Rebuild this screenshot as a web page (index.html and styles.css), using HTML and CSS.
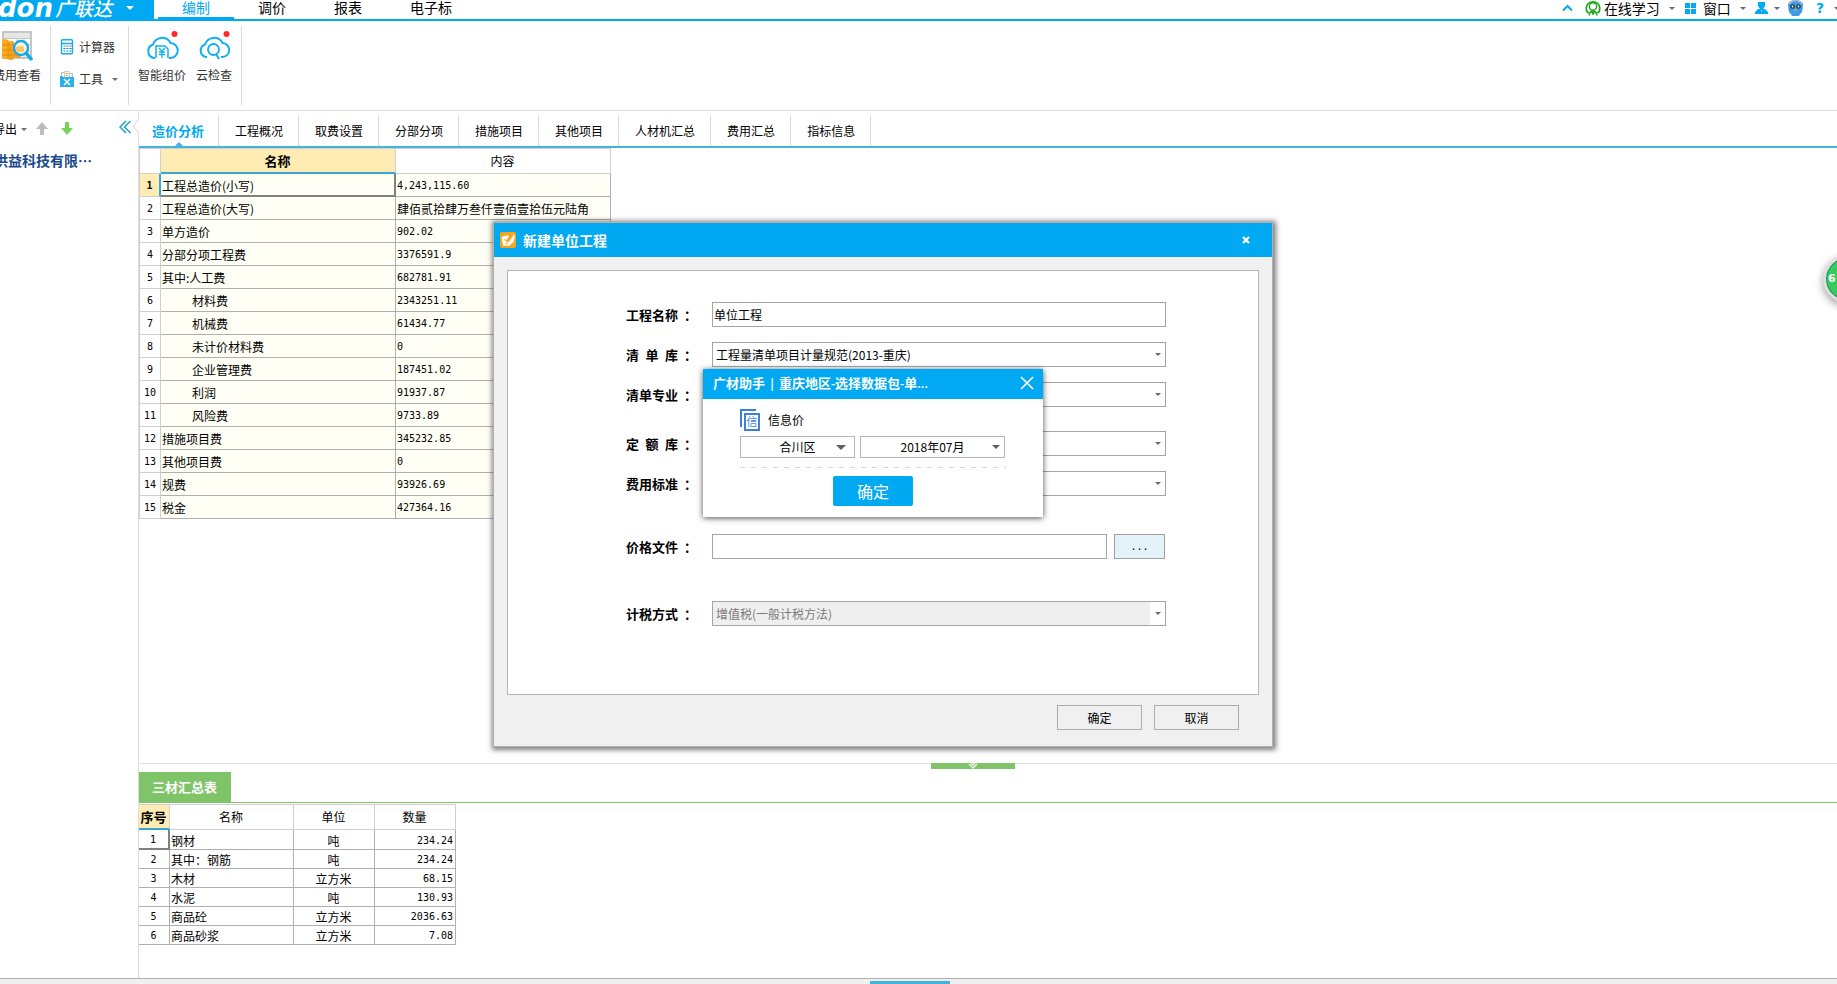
FILE: index.html
```html
<!DOCTYPE html>
<html lang="zh-CN">
<head>
<meta charset="utf-8">
<title>广联达 - 造价分析</title>
<link rel="stylesheet" href="styles.css">
</head>
<body>
<header class="topbar">
  <button class="brand" type="button"><span class="brand-en">don</span><span class="brand-cn">广联达</span><i class="tri tri-white"></i></button>
  <nav class="menu">
    <a class="menu-item active" href="#">编制</a>
    <a class="menu-item" href="#">调价</a>
    <a class="menu-item" href="#">报表</a>
    <a class="menu-item wide" href="#">电子标</a>
  </nav>
  <div class="tools">
    <button class="tool" type="button" aria-label="收起"><svg width="11" height="8" viewBox="0 0 11 8"><path d="M1 6.500 5.500 2 10 6.500" fill="none" stroke="#00a9f1" stroke-width="2"/></svg></button>
    <button class="tool tool-learn" type="button"><svg width="16" height="16" viewBox="0 0 16 16" fill="none" stroke="#17a81a"><path d="M4 12.500H2.500A6.800 6.800 0 1 1 13.500 12.500H12" stroke-width="1.600"/><circle cx="8" cy="6.500" r="3.700" stroke-width="1.400"/><path d="M4 15.500C4.500 12.500 6 11 8 11s3.500 1.500 4 4.500M6.500 11.500 8 14l1.500-2.500" stroke-width="1.500"/></svg><span>在线学习</span><i class="tri"></i></button>
    <button class="tool tool-window" type="button"><svg width="11" height="11" viewBox="0 0 11 11" fill="#00a9f1"><path d="M0 0h5v5H0zM6 0h5v5H6zM0 6h5v5H0zM6 6h5v5H6z"/></svg><span>窗口</span><i class="tri"></i></button>
    <button class="tool tool-user" type="button" aria-label="用户"><svg width="13" height="12" viewBox="0 0 13 12" fill="#00a9f1"><path d="M3 0h7v4L8 7h2l3 3v2H0v-2l3-3h2L3 4z"/><path d="m6 8 .5 2L7 8z" fill="#fff"/></svg><i class="tri"></i></button>
    <button class="tool" type="button" aria-label="助手"><svg width="17" height="16" viewBox="0 0 17 16"><path d="M1 4Q3 0 8.500 0T16 4l-.5 6Q15 13 13 14l-1 2H5l-1-2Q2 13 1.500 10z" fill="#3c9be8"/><path d="M2 4Q8.500-3 15 4" fill="none" stroke="#a9b8c6" stroke-width="1.500"/><circle cx="5.500" cy="6.500" r="2.300" fill="#2a3442"/><circle cx="11.500" cy="6.500" r="2.300" fill="#2a3442"/><circle cx="5.500" cy="6.500" r=".9" fill="#fff"/><circle cx="11.500" cy="6.500" r=".9" fill="#fff"/><path d="M7 9.500h3l-1.500 2z" fill="#f5b12c"/></svg></button>
    <button class="tool tool-help" type="button" aria-label="帮助"><b>?</b><i class="tri"></i></button>
  </div>
</header>

<section class="ribbon">
  <div class="ribbon-group first">
    <button class="big-btn" type="button">
      <svg width="32" height="30" viewBox="0 0 32 30"><path d="M2 1h28v26H2z" fill="#fff" stroke="#b4b4b4" stroke-width="1.500"/><path d="M3 2h26v5H3z" fill="#e6e6e6"/><path d="M3 7.500h27M3 13.500h27M3 20.500h27M16 7v20M23 7v20" stroke="#c4c4c4"/><path d="M1 9q3-2 6 0v18q-3 2-6 0z" fill="#ffad19"/><path d="M7 11q3-2 6 0v17q-3 2-6 0zM13 17q4-2 7 0v9q-3 2-7 0z" fill="#f7a11a"/><path d="M1 14h12M1 19h12M1 24h19M7 9v19" stroke="#e08c10"/><circle cx="20" cy="17" r="7" fill="#fff5d8" stroke="#16aeea" stroke-width="2.500"/><path d="M15 16q4-2 8 0v5h-8z" fill="#ffc66a"/><path d="m25 22 6 7" stroke="#16aeea" stroke-width="3.500"/></svg>
      <span>费用查看</span>
    </button>
  </div>
  <div class="ribbon-group stack">
    <button class="small-btn" type="button"><svg width="14" height="16" viewBox="0 0 14 16"><rect x="1.500" y=".7" width="11" height="14" rx="1" fill="#fff" stroke="#16aeea" stroke-width="1.400"/><path d="M1 4.500h12" stroke="#16aeea" stroke-width="1.500"/><path d="M3.500 7h2M6.500 7h2M3.500 9.500h2M6.500 9.500h2M3.500 12h2M6.500 12h2M9.500 9.500h2M9.500 12h2" stroke="#1687bd" stroke-width="1.200"/><path d="M9.500 7h2" stroke="#f55" stroke-width="1.200"/></svg><span>计算器</span></button>
    <button class="small-btn" type="button"><svg width="14" height="16" viewBox="0 0 14 16"><path d="M1.500 1.500h4v9h-4zM8.500 2.500h4v8h-4z" fill="#fff" stroke="#bbb"/><path d="M4.500.5h5v10h-5z" fill="#fff" stroke="#ccc"/><path d="M5.500 2.500h3M5.500 4.500h3" stroke="#f7b32b"/><path d="M0 5h2l1 1h11v10H0z" fill="#27b0ec"/><path d="m4 8 6 6M10 8l-6 6" stroke="#fff" stroke-width="1.500"/></svg><span>工具</span><i class="tri"></i></button>
  </div>
  <div class="ribbon-group clouds">
    <button class="big-btn" type="button">
      <svg width="34" height="30" viewBox="0 0 34 30"><path d="M10 27H9a7 7 0 0 1-1-13.500A9.500 9.500 0 0 1 25.500 12 7.500 7.500 0 0 1 25 27h-1" fill="none" stroke="#10b0ee" stroke-width="2"/><path d="M11 27V15h9l3 3v9" fill="#fff" stroke="#10b0ee" stroke-width="1.500"/><path d="m14 17 3 3 3-3M17 20v7M14 21h6M14 23.500h6" fill="none" stroke="#10b0ee" stroke-width="1.300"/><circle cx="29.500" cy="3" r="3" fill="#ff2a2a"/></svg>
      <span>智能组价</span>
    </button>
    <button class="big-btn" type="button">
      <svg width="34" height="30" viewBox="0 0 34 30"><path d="M10 26H9a6.500 6.500 0 0 1-1-12.500A9.500 9.500 0 0 1 25.500 12 7 7 0 0 1 25 26h-1" fill="none" stroke="#10b0ee" stroke-width="2"/><circle cx="16.500" cy="18.500" r="5.500" fill="#fff" stroke="#10b0ee" stroke-width="1.800"/><path d="m19 23 3 5" stroke="#10b0ee" stroke-width="2"/><circle cx="29.500" cy="3" r="3" fill="#ff2a2a"/></svg>
      <span>云检查</span>
    </button>
  </div>
</section>

<div class="workspace">
  <aside class="sidebar">
    <div class="side-tools">
      <button class="export" type="button">导出<i class="tri"></i></button>
      <button class="arrow" type="button" aria-label="上移"><svg width="12" height="14" viewBox="0 0 12 14"><path d="M6 0 12 7H8v6H4V7H0z" fill="#bcbcbc"/></svg></button>
      <button class="arrow" type="button" aria-label="下移"><svg width="12" height="14" viewBox="0 0 12 14"><path d="M4 0h4v6h4l-6 7-6-7h4z" fill="#75d35a"/></svg></button>
      <button class="collapse" type="button" aria-label="折叠"><svg width="12" height="14" viewBox="0 0 12 14" fill="none" stroke="#1da0c4" stroke-width="1.500"><path d="M7 1 1 7l6 6M11.500 1l-6 6 6 6"/></svg></button>
    </div>
    <a class="project" href="#">洪益科技有限…</a>
    <svg class="notch" width="7" height="14" viewBox="0 0 7 14"><path d="M7 0 1 7l6 7" fill="#fff" stroke="#d6d6d6"/></svg>
  </aside>
  <main class="content">
    <nav class="tabs">
      <a class="tab active" href="#">造价分析</a><a class="tab" href="#">工程概况</a><a class="tab" href="#">取费设置</a><a class="tab" href="#">分部分项</a><a class="tab" href="#">措施项目</a><a class="tab" href="#">其他项目</a><a class="tab" href="#">人材机汇总</a><a class="tab" href="#">费用汇总</a><a class="tab" href="#">指标信息</a>
    </nav>
    <section class="upper">
      <table class="grid cost">
        <colgroup><col class="c-no"><col class="c-name"><col class="c-val"></colgroup>
        <thead><tr><th></th><th class="hot">名称</th><th>内容</th></tr></thead>
        <tbody>
          <tr class="current"><th>1</th><td>工程总造价(小写)</td><td class="num">4,243,115.60</td></tr>
          <tr><th>2</th><td>工程总造价(大写)</td><td>肆佰贰拾肆万叁仟壹佰壹拾伍元陆角</td></tr>
          <tr><th>3</th><td>单方造价</td><td class="num">902.02</td></tr>
          <tr><th>4</th><td>分部分项工程费</td><td class="num">3376591.9</td></tr>
          <tr><th>5</th><td>其中:人工费</td><td class="num">682781.91</td></tr>
          <tr><th>6</th><td class="sub">材料费</td><td class="num">2343251.11</td></tr>
          <tr><th>7</th><td class="sub">机械费</td><td class="num">61434.77</td></tr>
          <tr><th>8</th><td class="sub">未计价材料费</td><td class="num">0</td></tr>
          <tr><th>9</th><td class="sub">企业管理费</td><td class="num">187451.02</td></tr>
          <tr><th>10</th><td class="sub">利润</td><td class="num">91937.87</td></tr>
          <tr><th>11</th><td class="sub">风险费</td><td class="num">9733.89</td></tr>
          <tr><th>12</th><td>措施项目费</td><td class="num">345232.85</td></tr>
          <tr><th>13</th><td>其他项目费</td><td class="num">0</td></tr>
          <tr><th>14</th><td>规费</td><td class="num">93926.69</td></tr>
          <tr><th>15</th><td>税金</td><td class="num">427364.16</td></tr>
        </tbody>
      </table>
    </section>
    <section class="lower">
      <button class="splitter" type="button" aria-label="收起下方面板"><svg width="10" height="6" viewBox="0 0 10 6" fill="none" stroke="#e4f5dd" stroke-width="1.500"><path d="m1 1 4 4 4-4M3 0l2 2 2-2"/></svg></button>
      <div class="lower-tabs"><a class="lower-tab" href="#">三材汇总表</a></div>
      <table class="grid material">
        <colgroup><col class="m-no"><col class="m-name"><col class="m-unit"><col class="m-qty"></colgroup>
        <thead><tr><th class="hot">序号</th><th>名称</th><th>单位</th><th>数量</th></tr></thead>
        <tbody>
          <tr class="current"><th>1</th><td>钢材</td><td class="unit">吨</td><td class="num">234.24</td></tr>
          <tr><th>2</th><td>其中：钢筋</td><td class="unit">吨</td><td class="num">234.24</td></tr>
          <tr><th>3</th><td>木材</td><td class="unit">立方米</td><td class="num">68.15</td></tr>
          <tr><th>4</th><td>水泥</td><td class="unit">吨</td><td class="num">130.93</td></tr>
          <tr><th>5</th><td>商品砼</td><td class="unit">立方米</td><td class="num">2036.63</td></tr>
          <tr><th>6</th><td>商品砂浆</td><td class="unit">立方米</td><td class="num">7.08</td></tr>
        </tbody>
      </table>
    </section>
  </main>
</div>
<footer class="statusbar"><span class="status-active"></span></footer>

<div class="badge">6</div>

<div class="dialog" role="dialog" aria-labelledby="dlg-title">
  <div class="dialog-head">
    <svg width="16" height="16" viewBox="0 0 16 16"><rect width="16" height="16" rx="2" fill="#f9a51a"/><path d="M1.500 5 8 3l1 2-3.500 3.500L8 10l5.500-7.500L15 4l-1.500 6L9 14l-6-.5z" fill="#fff"/><path d="m4 7 4 3.500L13 4M5 11l3 1.500" fill="none" stroke="#f9a51a" stroke-width=".8"/></svg>
    <h2 id="dlg-title">新建单位工程</h2>
    <button class="dialog-close" type="button" aria-label="关闭"><svg width="8" height="8" viewBox="0 0 8 8"><path d="m1 1 6 6M7 1 1 7" stroke="#fff" stroke-width="2.200"/></svg></button>
  </div>
  <form class="dialog-body">
    <div class="fields">
      <div class="field"><label for="f1">工程名称</label><span class="colon">：</span><input id="f1" type="text" value="单位工程"></div>
      <div class="field"><label for="f2">清 单 库</label><span class="colon">：</span><span class="select"><select id="f2"><option>工程量清单项目计量规范(2013-重庆)</option></select></span></div>
      <div class="field"><label for="f3">清单专业</label><span class="colon">：</span><span class="select"><select id="f3"><option></option></select></span></div>
    </div>
    <div class="fields quota">
      <div class="field"><label for="f4">定 额 库</label><span class="colon">：</span><span class="select"><select id="f4"><option></option></select></span></div>
      <div class="field"><label for="f5">费用标准</label><span class="colon">：</span><span class="select"><select id="f5"><option></option></select></span></div>
    </div>
    <div class="field price"><label for="f6">价格文件</label><span class="colon">：</span><input id="f6" type="text"><button class="browse" type="button">...</button></div>
    <div class="field tax"><label for="f7">计税方式</label><span class="colon">：</span><span class="select off"><select id="f7" disabled><option>增值税(一般计税方法)</option></select></span></div>
  </form>
  <div class="dialog-foot"><button type="button">确定</button><button type="button">取消</button></div>

  <div class="popup" role="dialog" aria-labelledby="pop-title">
    <div class="popup-head"><h3 id="pop-title">广材助手 | 重庆地区-选择数据包-单...</h3><button type="button" aria-label="关闭"><svg width="14" height="14" viewBox="0 0 14 14"><path d="m1 1 12 12M13 1 1 13" stroke="#fff" stroke-width="1.700"/></svg></button></div>
    <div class="popup-body">
      <div class="info"><span class="info-icon">信</span><span>信息价</span></div>
      <div class="picks">
        <span class="select area"><select aria-label="地区"><option>合川区</option></select></span>
        <span class="select month"><select aria-label="月份"><option>2018年07月</option></select></span>
      </div>
      <div class="dash"></div>
      <button class="confirm" type="button">确定</button>
    </div>
  </div>
</div>
</body>
</html>
```

FILE: styles.css
```css
* { box-sizing: border-box; }
html, body { height: 100%; }
body {
  margin: 0;
  display: flex;
  flex-direction: column;
  position: relative;
  overflow: hidden;
  background: #fff;
  color: #000;
  font: 12px/16px "Noto Sans CJK SC", sans-serif;
}
button, input, select { font: inherit; color: inherit; margin: 0; }
button { padding: 0; border: 0; background: none; white-space: nowrap; }
a { color: inherit; text-decoration: none; }
h2, h3 { margin: 0; }
svg { display: block; flex: none; }
.tri {
  flex: none;
  display: inline-block;
  border: 3px solid transparent;
  border-top-color: #6b6b78;
  border-bottom: 0;
}
.tri-white { border-width: 4px; border-bottom: 0; border-top-color: #fff; }

/* top bar */
.topbar {
  flex: none;
  display: flex;
  height: 21px;
  border-bottom: 2px solid #00a9f1;
  font-size: 14px;
  line-height: 14px;
}
.brand {
  display: flex;
  align-items: center;
  width: 154px;
  height: 21px;
  padding-bottom: 6px;
  background: #00a9f1;
  color: #fff;
}
.brand-en { width: 57px; margin-left: -2px; font: italic bold 26px/14px "DejaVu Sans", sans-serif; text-align: left; }
.brand-cn { margin-right: 14px; font-size: 19px; font-weight: 500; font-style: italic; }
.menu { display: flex; padding-left: 4px; }
.menu-item { width: 76px; height: 21px; text-align: center; }
.menu-item.wide { width: 90px; }
.menu-item.active { color: #00a9f1; border-bottom: 4px solid #00a9f1; }
.tools { display: flex; align-items: center; margin-left: auto; height: 16px; margin-right: -3px; }
.tool { display: flex; align-items: center; height: 16px; margin-left: 12px; }
.tool-learn svg { margin-right: 3px; }
.tool-learn .tri, .tool-window .tri { margin-left: 9px; }
.tool-window { margin-left: 10px; }
.tool-window svg { margin-right: 7px; }
.tool-user { margin-left: 9px; }
.tool-user .tri { margin-left: 6px; }
.tool-user + .tool { margin-left: 7px; }
.tool-help b { color: #00a9f1; font: bold 14px/14px "DejaVu Sans", sans-serif; }
.tool-help .tri { margin-left: 10px; }

/* ribbon */
.ribbon { flex: none; display: flex; height: 90px; padding: 5px 0; border-bottom: 1px solid #dcdcdc; color: #333; }
.ribbon-group { display: flex; height: 79px; border-right: 1px solid #dcdcdc; }
.ribbon-group.first { width: 51px; }
.first .big-btn { margin-left: -7px; width: 48px; }
.big-btn { display: flex; flex-direction: column; align-items: center; gap: 6px; height: 64px; padding-top: 5px; }
.stack { flex-direction: column; width: 78px; gap: 16px; padding: 13px 0 0 9px; }
.small-btn { display: flex; align-items: center; gap: 5px; height: 16px; }
.small-btn .tri { margin-left: 4px; }
.clouds { gap: 10px; padding: 0 9px; }

/* workspace */
.workspace { flex: 1; display: flex; min-height: 0; }
.sidebar { position: relative; flex: none; width: 139px; border-right: 1px solid #dcdcdc; }
.side-tools { display: flex; align-items: center; height: 36px; }
.export { display: flex; align-items: center; gap: 4px; margin-left: -7px; }
.arrow { margin-left: 9px; }
.arrow + .arrow { margin-left: 13px; }
.collapse { margin: 0 7px 5px auto; }
.project { display: block; margin: 3px 0 0 -6px; font-size: 14px; line-height: 20px; font-weight: bold; color: #1b4a8a; white-space: nowrap; }
.notch { position: absolute; right: -1px; top: 8px; }
.content { flex: 1; display: flex; flex-direction: column; min-width: 0; }
.tabs { flex: none; display: flex; height: 37px; padding-top: 4px; border-bottom: 2px solid #41b4e0; }
.tab { position: relative; padding: 0 15px 0 16px; border-right: 1px solid #dcdcdc; line-height: 32px; }
.tab.active { padding: 0 14px 0 13px; font-size: 13px; font-weight: bold; color: #00a9f1; }
.tab.active::after {
  content: "";
  position: absolute;
  left: 50%;
  bottom: 0;
  margin-left: -4px;
  border: 4px solid transparent;
  border-top: 0;
  border-bottom-color: #41b4e0;
}
.upper { flex: 1; min-height: 0; }

/* data grids */
.grid { table-layout: fixed; border-collapse: separate; border-spacing: 0; line-height: 16px; }
.grid th, .grid td { padding: 0 2px 0 1px; border: 0 solid #b0b0b0; border-width: 0 1px 1px 0; white-space: nowrap; }
.grid th { font-weight: normal; text-align: center; border-color: #d0d0d0; }
.grid td { text-align: left; }
.grid thead th { height: 26px; border-top-width: 1px; }
.grid thead .hot { background: #ffecb3; font-weight: bold; font-size: 13px; border-bottom: 2px solid #3aa6d8; }
.grid tbody th, .grid tbody td { padding-top: 2px; }
.grid tbody th, .grid .num { font-family: "DejaVu Sans Mono", monospace; font-size: 10px; }
.cost { width: 472px; }
.cost .c-no { width: 22px; }
.cost .c-name { width: 235px; }
.cost .c-val { width: 215px; }
.cost th:first-child { border-left-width: 1px; padding-left: 0; padding-right: 0; }
.cost tbody th, .cost tbody td { height: 23px; }
.cost tbody td { background: #fffff5; }
.cost .sub { padding-left: 31px; }
.cost .current th { background: #ffecb3; font-weight: bold; border-right: 2px solid #3aa6d8; }
.cost .current td:nth-child(2) { border-right: 2px solid #808080; border-bottom: 2px solid #808080; }
.material { width: 317px; margin-top: 1px; }
.material .m-no { width: 31px; }
.material .m-name { width: 124px; }
.material .m-unit, .material .m-qty { width: 81px; }
.material tbody th, .material tbody td { height: 19px; }
.material tbody th { border-color: #b0b0b0; }
.material .current th { border-right: 2px solid #808080; border-bottom: 2px solid #808080; }
.material .unit { text-align: center; }
.material .num { text-align: right; }

.lower { position: relative; flex: none; height: 215px; padding-top: 8px; border-top: 1px solid #e0e0e0; }
.splitter {
  position: absolute;
  top: -1px;
  left: 50%;
  width: 84px;
  height: 6px;
  margin-left: -57px;
  display: flex;
  justify-content: center;
  background: #80c46a;
}
.lower-tabs { display: flex; border-bottom: 1px solid #80c46a; }
.lower-tab { padding: 0 14px 0 13px; line-height: 30px; font-size: 13px; font-weight: bold; color: #fff; background: #80c46a; }

.statusbar { flex: none; display: flex; justify-content: center; height: 6px; padding-top: 2px; background: #f0f0f0; border-top: 1px solid #b0b0b0; }
.status-active { width: 80px; margin-right: 18px; background: #41b4e0; }

.badge {
  position: absolute;
  right: -34px;
  top: 255px;
  width: 48px;
  height: 48px;
  padding-left: 2px;
  border: 3px solid #dedede;
  border-radius: 50%;
  background: #36c95f;
  color: #fff;
  font: bold 11px/42px "DejaVu Sans", sans-serif;
  box-shadow: inset 0 0 0 1px #1c8a52, 0 3px 8px rgba(0, 0, 0, .4);
}

/* new unit project dialog */
.dialog {
  position: absolute;
  left: 494px;
  top: 223px;
  width: 778px;
  background: #f0f0f0;
  box-shadow: 0 0 0 1px #b0b0b0, 1px 1px 5px 3px rgba(0, 0, 0, .5);
}
.dialog-head { display: flex; align-items: center; gap: 7px; height: 34px; padding: 0 22px 0 6px; background: #00a9f1; color: #fff; }
.dialog-head h2 { font-size: 14px; line-height: 20px; }
.dialog-close { margin-left: auto; }
.dialog-body { height: 425px; margin: 13px 13px 10px; padding: 31px 92px 0 118px; border: 1px solid #b5b5b5; background: #fff; }
.fields { display: grid; gap: 15px; }
.quota { margin-top: 24px; }
.price { margin-top: 38px; }
.tax { margin-top: 42px; }
.field { display: flex; align-items: center; height: 25px; }
.field label { flex: none; width: 52px; font-size: 13px; font-weight: bold; text-align-last: justify; white-space: nowrap; }
.colon { flex: none; width: 34px; padding-left: 6px; font-size: 13px; font-weight: bold; }
.field input, .select { flex: 1; min-width: 0; height: 100%; border: 1px solid #a5a5a5; background: #fff; }
.field input { padding: 0 1px; border-radius: 0; }
.select { position: relative; display: flex; }
.select::after {
  content: "";
  position: absolute;
  right: 4px;
  top: 50%;
  margin-top: -2px;
  border: 3px solid transparent;
  border-top-color: #6b6b78;
  border-bottom: 0;
  pointer-events: none;
}
.select select { flex: 1; min-width: 0; padding: 0 3px; border: 0; border-radius: 0; appearance: none; background: none; opacity: 1; }
.select.off { padding-right: 15px; }
.select.off select { background: #efefef; color: #7a7a7a; }
.browse { width: 51px; height: 25px; margin: 0 1px 0 7px; border: 1px solid #a0a0a0; background: #e3f2f8; font-family: "DejaVu Sans Mono", monospace; font-size: 10px; }
.dialog-foot { display: flex; justify-content: flex-end; gap: 12px; padding: 0 33px 16px 0; }
.dialog-foot button { width: 85px; height: 25px; border: 1px solid #adadad; }

/* data package popup */
.popup { position: absolute; left: 209px; top: 146px; width: 340px; background: #fff; box-shadow: 0 1px 6px rgba(0, 0, 0, .7); }
.popup-head { display: flex; align-items: center; justify-content: space-between; height: 30px; padding: 0 9px 2px 10px; background: #00a9f1; color: #fff; }
.popup-head h3 { font-family: "Open Sans", "Noto Sans CJK SC", sans-serif; font-size: 13px; line-height: 20px; font-weight: 600; }
.popup-body { display: flex; flex-direction: column; padding: 10px 37px 11px; }
.info { display: flex; align-items: center; gap: 8px; height: 22px; }
.info-icon {
  width: 16px;
  height: 18px;
  margin: 4px 0 0 4px;
  border: 1px solid #3f7fdc;
  background: #fff;
  color: #3f7fdc;
  font-size: 11px;
  line-height: 15px;
  text-align: center;
  box-shadow: inset 0 0 0 1px #3f7fdc, -2px -2px 0 0 #fff, -4px -4px 0 0 #3f7fdc;
}
.picks { display: flex; gap: 5px; margin-top: 5px; height: 22px; }
.popup .select { flex: none; border-color: #b5b5b5; }
.popup .area { width: 115px; }
.popup .month { width: 145px; }
.popup select { text-align: center; text-align-last: center; }
.popup .select::after { right: 8px; border-width: 5px; border-bottom: 0; border-top-color: #606060; }
.popup .month::after { right: 4px; border-width: 4px; border-bottom: 0; }
.dash { height: 1px; margin: 9px 0 8px; background: repeating-linear-gradient(90deg, #d9d9d9 0 5px, transparent 5px 11px); }
.confirm { align-self: center; width: 80px; height: 30px; border-radius: 2px; background: #00a9f1; color: #fff; font-size: 16px; }
```
